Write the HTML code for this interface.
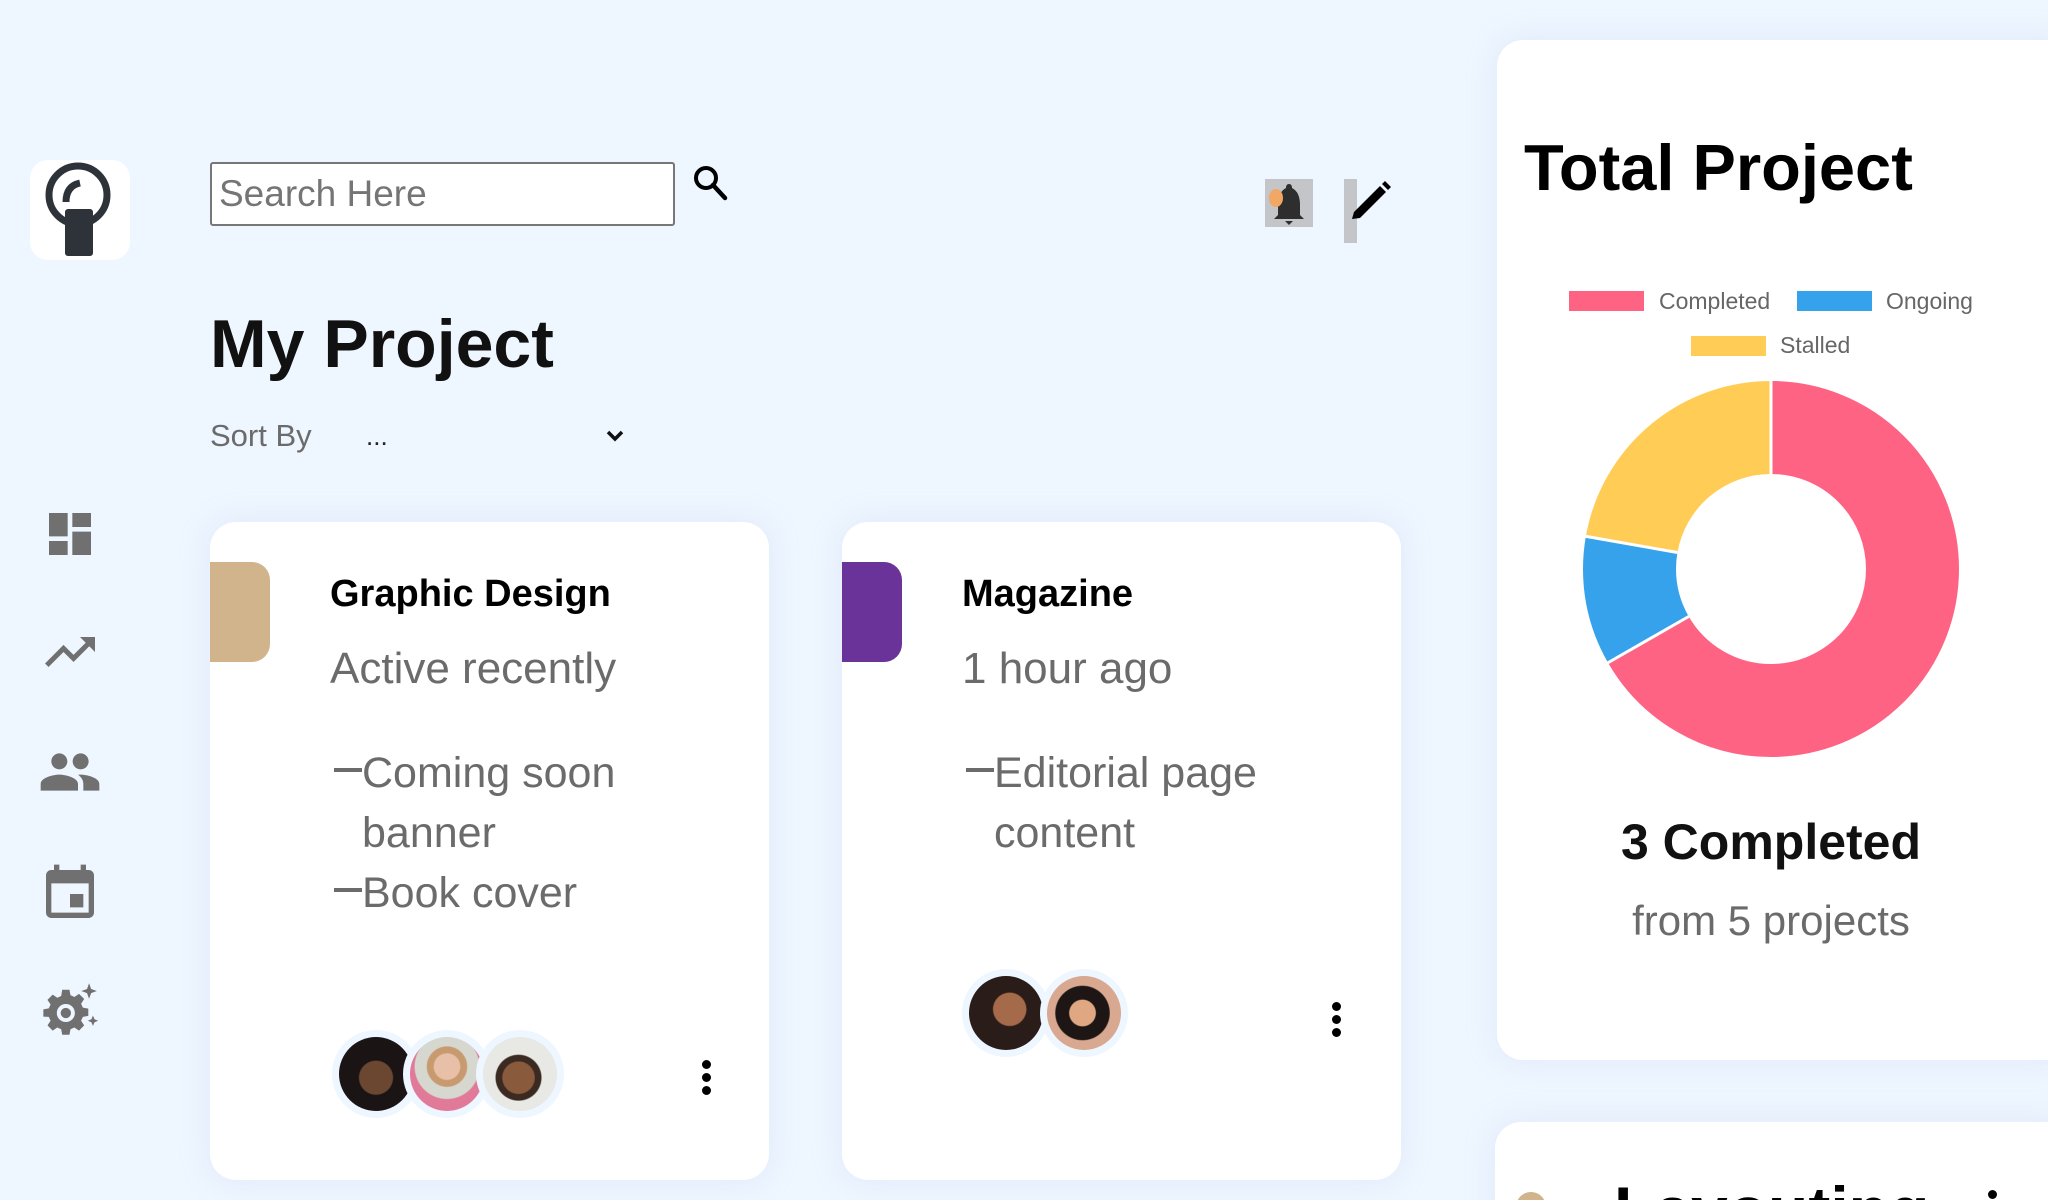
<!DOCTYPE html>
<html><head><meta charset="utf-8">
<style>
*{box-sizing:border-box;margin:0;padding:0}
html,body{width:2048px;height:1200px;overflow:hidden}
body{background:#eef6ff;font-family:"Liberation Sans",sans-serif}
#w{position:relative;width:2048px;height:1200px;overflow:hidden;background:#eef6ff}
.abs{position:absolute}
.card{position:absolute;background:#fff;border-radius:26px;box-shadow:0 0 30px rgba(180,200,230,0.25)}
.gray{color:#6b6b6b}
.av{position:absolute;width:88px;height:88px;border-radius:50%;background:#eef6ff;}
.av i{position:absolute;left:7px;top:7px;width:74px;height:74px;border-radius:50%;overflow:hidden;display:block}
.kebab{position:absolute;width:10px}
.kebab b{display:block;width:9px;height:9px;border-radius:50%;background:#000;margin-bottom:4px}
</style></head><body><div id="w">

<!-- logo -->
<div class="abs" style="left:30px;top:160px;width:100px;height:100px;background:#fff;border-radius:18px"></div>
<svg class="abs" style="left:30px;top:150px" width="120" height="120" viewBox="0 0 120 120">
<circle cx="48" cy="45" r="29" fill="none" stroke="#2e333a" stroke-width="7"/>
<path d="M36 52 Q36 36 50 33" fill="none" stroke="#2e333a" stroke-width="7"/>
<rect x="35" y="59" width="28" height="47" rx="3" fill="#2e333a"/>
</svg>

<!-- search -->
<div class="abs" style="left:210px;top:162px;width:465px;height:64px;border:2px solid #777;border-radius:3px;background:#fff"></div>
<div class="abs" style="left:219px;top:170px;font-size:37px;color:#757575;line-height:48px">Search Here</div>
<svg class="abs" style="left:692px;top:164px" width="38" height="38" viewBox="0 0 38 38">
<circle cx="14" cy="14" r="10" fill="none" stroke="#000" stroke-width="4"/>
<line x1="21" y1="21" x2="33" y2="34" stroke="#000" stroke-width="4.5" stroke-linecap="round"/>
</svg>

<!-- bell -->
<div class="abs" style="left:1265px;top:179px;width:48px;height:48px;background:#c3c5c8"></div>
<svg class="abs" style="left:1265px;top:179px" width="48" height="50" viewBox="0 0 48 50">
<path d="M24 5 Q27 5 27 9 Q35 13 35 26 L35 36 L39 40 L9 40 L13 36 L13 26 Q13 13 21 9 Q21 5 24 5Z" fill="#2e2e2e"/>
<path d="M20 42 L28 42 L24 46Z" fill="#2e2e2e"/>
<ellipse cx="11" cy="19" rx="7" ry="9" fill="#f2a765"/>
</svg>
<!-- pencil -->
<div class="abs" style="left:1344px;top:179px;width:13px;height:64px;background:#c3c5c8"></div>
<svg class="abs" style="left:1350px;top:180px" width="45" height="45" viewBox="0 0 45 45">
<path d="M2 39 L4 32 L30 6 L36 12 L10 38 Z" fill="#000"/>
<path d="M32 4 L35 1 L41 7 L38 10 Z" fill="#000"/>
</svg>

<!-- title -->
<div class="abs" style="left:210px;top:302px;font-size:68px;font-weight:bold;color:#111;line-height:84px">My Project</div>
<div class="abs gray" style="left:210px;top:416px;font-size:31px;line-height:40px">Sort By</div>
<div class="abs" style="left:366px;top:416px;font-size:26px;line-height:40px;color:#222">...</div>
<svg class="abs" style="left:605px;top:428px" width="20" height="16" viewBox="0 0 20 16"><path d="M3 4 L10 11 L17 4" fill="none" stroke="#111" stroke-width="3.5"/></svg>

<!-- sidebar icons -->
<svg class="abs" style="left:42px;top:506px" width="56" height="56" viewBox="0 0 24 24"><path fill="#707070" d="M3 13h8V3H3v10zm0 8h8v-6H3v6zm10 0h8V11h-8v10zm0-18v6h8V3h-8z"/></svg>
<svg class="abs" style="left:40px;top:622px" width="60" height="60" viewBox="0 0 24 24"><path fill="#707070" d="M16 6l2.29 2.29-4.88 4.88-4-4L2 16.59 3.41 18l6-6 4 4 6.3-6.29L22 12V6z"/></svg>
<svg class="abs" style="left:38px;top:740px" width="64" height="64" viewBox="0 0 24 24"><path fill="#707070" d="M16 11c1.66 0 2.99-1.34 2.99-3S17.66 5 16 5c-1.66 0-3 1.34-3 3s1.34 3 3 3zm-8 0c1.66 0 2.99-1.34 2.99-3S9.66 5 8 5C6.34 5 5 6.34 5 8s1.34 3 3 3zm0 2c-2.33 0-7 1.17-7 3.5V19h14v-2.5c0-2.33-4.67-3.5-7-3.5zm8 0c-.29 0-.62.02-.97.05 1.16.84 1.97 1.97 1.97 3.45V19h6v-2.5c0-2.33-4.67-3.5-7-3.5z"/></svg>
<svg class="abs" style="left:38px;top:862px" width="64" height="64" viewBox="0 0 24 24"><path fill="#707070" d="M17 12h-5v5h5v-5zM16 1v2H8V1H6v2H5c-1.11 0-1.99.9-1.99 2L3 19c0 1.1.89 2 2 2h14c1.1 0 2-.9 2-2V5c0-1.1-.9-2-2-2h-1V1h-2zm3 18H5V8h14v11z"/></svg>
<svg class="abs" style="left:40px;top:982px" width="62" height="62" viewBox="0 0 24 24"><path fill="#707070" d="M10 8.5a3.5 3.5 0 1 0 0 7a3.5 3.5 0 1 0 0-7zM8.6 3h2.8l.4 2.1 1.5.7 1.8-1.2 2 2-1.2 1.8.7 1.5 2.1.4v2.8l-2.1.4-.7 1.5 1.2 1.8-2 2-1.8-1.2-1.5.7-.4 2.1H8.6l-.4-2.1-1.5-.7-1.8 1.2-2-2 1.2-1.8-.7-1.5L1.3 13.4v-2.8l2.1-.4.7-1.5L2.9 6.9l2-2 1.8 1.2 1.5-.7z M10 10a2 2 0 1 1 0 4a2 2 0 1 1 0-4z" fill-rule="evenodd"/><path fill="#707070" d="M19 0.5l.8 2.2 2.2.8-2.2.8L19 6.5l-.8-2.2-2.2-.8 2.2-.8z M20.5 13l.6 1.4 1.4.6-1.4.6-.6 1.4-.6-1.4-1.4-.6 1.4-.6z"/></svg>

<!-- card 1 -->
<div class="card" style="left:210px;top:522px;width:559px;height:658px"></div>
<div class="abs" style="left:210px;top:562px;width:60px;height:100px;background:#d2b48c;border-radius:0 18px 18px 0"></div>
<div class="abs" style="left:330px;top:570px;font-size:38px;font-weight:bold;color:#000;line-height:48px">Graphic Design</div>
<div class="abs gray" style="left:330px;top:642px;font-size:44px;line-height:54px">Active recently</div>
<div class="abs" style="left:334px;top:768px;width:28px;height:4px;background:#6b6b6b"></div>
<div class="abs" style="left:334px;top:888px;width:28px;height:4px;background:#6b6b6b"></div>
<div class="abs gray" style="left:362px;top:743px;font-size:43px;line-height:60px;width:300px">Coming soon<br>banner<br>Book cover</div>
<div class="av" style="left:332px;top:1030px"><i style="background:radial-gradient(circle at 50% 55%,#6b4630 0 30%,#1a1414 32% 100%)"></i></div>
<div class="av" style="left:403px;top:1030px"><i style="background:radial-gradient(circle at 50% 40%,#e8c0a8 0 22%,#c89a70 24% 34%,#d6d8d0 36% 55%,#e07a98 57% 100%)"></i></div>
<div class="av" style="left:476px;top:1030px"><i style="background:radial-gradient(circle at 48% 55%,#8a5a3c 0 28%,#3a2a22 30% 40%,#e8e8e4 42% 100%)"></i></div>
<div class="kebab" style="left:702px;top:1060px"><b></b><b></b><b></b></div>

<!-- card 2 -->
<div class="card" style="left:842px;top:522px;width:559px;height:658px"></div>
<div class="abs" style="left:842px;top:562px;width:60px;height:100px;background:#6a3399;border-radius:0 18px 18px 0"></div>
<div class="abs" style="left:962px;top:570px;font-size:38px;font-weight:bold;color:#000;line-height:48px">Magazine</div>
<div class="abs gray" style="left:962px;top:642px;font-size:44px;line-height:54px">1 hour ago</div>
<div class="abs" style="left:966px;top:768px;width:28px;height:4px;background:#6b6b6b"></div>
<div class="abs gray" style="left:994px;top:743px;font-size:43px;line-height:60px;width:330px">Editorial page<br>content</div>
<div class="av" style="left:962px;top:969px"><i style="background:radial-gradient(circle at 55% 45%,#a56a4a 0 28%,#2a1c18 30% 100%)"></i></div>
<div class="av" style="left:1040px;top:969px"><i style="background:radial-gradient(circle at 48% 50%,#e0a882 0 24%,#1e1614 26% 50%,#d8a890 52% 100%)"></i></div>
<div class="kebab" style="left:1332px;top:1002px"><b></b><b></b><b></b></div>

<!-- right panel -->
<div class="card" style="left:1497px;top:40px;width:580px;height:1020px"></div>
<div class="abs" style="left:1524px;top:128px;font-size:65px;font-weight:bold;color:#000;line-height:80px">Total Project</div>
<div class="abs" style="left:1569px;top:291px;width:75px;height:20px;background:#ff6384"></div>
<div class="abs" style="left:1659px;top:287px;font-size:23px;color:#666;line-height:28px">Completed</div>
<div class="abs" style="left:1797px;top:291px;width:75px;height:20px;background:#36a2eb"></div>
<div class="abs" style="left:1886px;top:287px;font-size:23px;color:#666;line-height:28px">Ongoing</div>
<div class="abs" style="left:1691px;top:336px;width:75px;height:20px;background:#ffcd56"></div>
<div class="abs" style="left:1780px;top:331px;font-size:23px;color:#666;line-height:28px">Stalled</div>
<svg class="abs" style="left:1571px;top:369px" width="400" height="400" viewBox="0 0 400 400">
<g transform="rotate(-90 200 200)" fill="none" stroke-width="93">
<circle cx="200" cy="200" r="141.5" stroke="#ff6384" stroke-dasharray="592.7 889.1"/>
<circle cx="200" cy="200" r="141.5" stroke="#36a2eb" stroke-dasharray="0 592.7 98.8 889.1"/>
<circle cx="200" cy="200" r="141.5" stroke="#ffcd56" stroke-dasharray="0 691.5 197.6 889.1"/>
</g>
<g stroke="#fff" stroke-width="3">
<line x1="200" y1="105" x2="200" y2="8"/>
<line x1="117.7" y1="247.5" x2="33" y2="296"/>
<line x1="106.4" y1="183.5" x2="10" y2="166.5"/>
</g>
</svg>
<div class="abs" style="left:1497px;top:812px;width:548px;text-align:center;font-size:50px;font-weight:bold;color:#111;line-height:60px">3 Completed</div>
<div class="abs gray" style="left:1497px;top:894px;width:548px;text-align:center;font-size:42px;line-height:54px">from 5 projects</div>

<!-- bottom right card -->
<div class="card" style="left:1495px;top:1122px;width:580px;height:120px"></div>
<div class="abs" style="left:1516px;top:1192px;width:30px;height:30px;border-radius:50%;background:#d2b48c"></div>
<div class="abs" style="left:1614px;top:1170px;font-size:66px;font-weight:bold;color:#000;line-height:80px">Layouting</div>
<div class="abs" style="left:1988px;top:1190px;width:9px;height:9px;border-radius:50%;background:#000"></div>

</div></body></html>
